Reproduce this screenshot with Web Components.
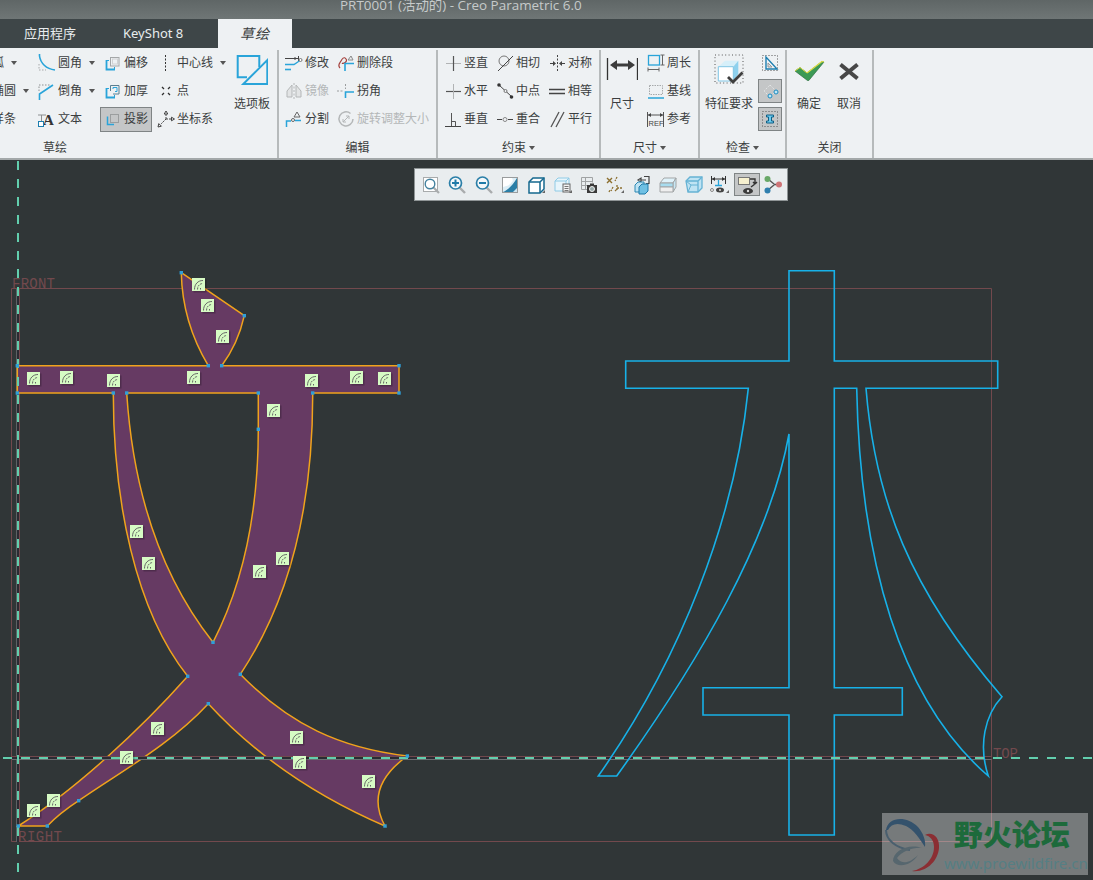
<!DOCTYPE html>
<html lang="zh">
<head>
<meta charset="utf-8">
<title>Creo Parametric</title>
<style>
  html, body { margin: 0; height: 100%; background: #303637; }
  body { font-family: "Noto Sans", "Noto Sans CJK SC", sans-serif; font-size: 12px; color: #3b3e40; overflow: hidden; }
</style>
</head>
<body>
<creo-app>
  <title-bar>PRT0001 (活动的) - Creo Parametric 6.0</title-bar>
  <ribbon-tabs>
    <ribbon-tab style="width:123px;padding-left:24px">应用程序</ribbon-tab>
    <ribbon-tab style="width:95px">KeyShot 8</ribbon-tab>
    <ribbon-tab active style="width:74px">草绘</ribbon-tab>
  </ribbon-tabs>
  <sketch-ribbon>
    <rb-group label="草绘" style="width:446px;margin-left:-167px;--pad:135px;--cols:66px 66px 53px 79px 40px">
      <rb-tool icon="arc" caret>弧</rb-tool>
      <rb-tool icon="ellipse" caret>椭圆</rb-tool>
      <rb-tool icon="spline">样条</rb-tool>
      <rb-tool icon="fillet" caret>圆角</rb-tool>
      <rb-tool icon="chamfer" caret>倒角</rb-tool>
      <rb-tool icon="text">文本</rb-tool>
      <rb-tool icon="offset">偏移</rb-tool>
      <rb-tool icon="thicken">加厚</rb-tool>
      <rb-tool icon="project" active>投影</rb-tool>
      <rb-tool icon="centerline" caret>中心线</rb-tool>
      <rb-tool icon="point">点</rb-tool>
      <rb-tool icon="csys">坐标系</rb-tool>
      <rb-large icon="palette">选项板</rb-large>
    </rb-group>
    <rb-group label="编辑" style="width:159px;--pad:2px;--cols:52px 102px">
      <rb-tool icon="modify">修改</rb-tool>
      <rb-tool icon="mirror" disabled>镜像</rb-tool>
      <rb-tool icon="divide">分割</rb-tool>
      <rb-tool icon="delete">删除段</rb-tool>
      <rb-tool icon="corner">拐角</rb-tool>
      <rb-tool icon="rotate" disabled>旋转调整大小</rb-tool>
    </rb-group>
    <rb-group label="约束" caret style="width:163px;--pad:2px;--cols:52px 52px 52px">
      <rb-tool icon="vertical">竖直</rb-tool>
      <rb-tool icon="horizontal">水平</rb-tool>
      <rb-tool icon="perpendicular">垂直</rb-tool>
      <rb-tool icon="tangent">相切</rb-tool>
      <rb-tool icon="midpoint">中点</rb-tool>
      <rb-tool icon="coincident">重合</rb-tool>
      <rb-tool icon="symmetric">对称</rb-tool>
      <rb-tool icon="equal">相等</rb-tool>
      <rb-tool icon="parallel">平行</rb-tool>
    </rb-group>
    <rb-group label="尺寸" caret style="width:99px;--cols:42px 54px">
      <rb-large icon="dimension">尺寸</rb-large>
      <rb-tool icon="perimeter">周长</rb-tool>
      <rb-tool icon="baseline">基线</rb-tool>
      <rb-tool icon="reference">参考</rb-tool>
    </rb-group>
    <rb-group label="检查" caret style="width:87px;--cols:58px 24px">
      <rb-large icon="feature">特征要求</rb-large>
      <rb-tool icon="overlap" square></rb-tool>
      <rb-tool icon="shade" square active></rb-tool>
      <rb-tool icon="ibeam" square active></rb-tool>
    </rb-group>
    <rb-group label="关闭" style="width:87px;--pad:2px;--cols:40px 40px">
      <rb-large icon="ok">确定</rb-large>
      <rb-large icon="cancel">取消</rb-large>
    </rb-group>
  </sketch-ribbon>
  <sketch-canvas>
    <view-toolbar></view-toolbar>
    <forum-mark></forum-mark>
  </sketch-canvas>
</creo-app>

<script>
const BLUE = '#29a4d9'
const GREY = '#b4b7b8'

// ribbon icons, drawn on the pixel grid of the box they sit in
const ICONS = {
  arc: `<path d="M2 15C3 8 8 3 16 2" fill="none" stroke="${BLUE}" stroke-width="1.5"/>`,
  ellipse: `<ellipse cx="9" cy="9" rx="8" ry="5" fill="none" stroke="${BLUE}" stroke-width="1.5"/>`,
  spline: `<path d="M1 14C5 2 11 16 17 4" fill="none" stroke="${BLUE}" stroke-width="1.5"/>`,
  fillet: `<path d="M1 10v6h7" fill="none" stroke="#a6a9aa" stroke-dasharray="1.5 1.5"/><path d="M1.5 0v2C2.5 9 8 15 17 16" fill="none" stroke="${BLUE}" stroke-width="1.6"/>`,
  chamfer: `<path d="M1 9V3h11" fill="none" stroke="#8d9091" stroke-dasharray="1.5 1.5"/><path d="M1.5 18V12L15 3" fill="none" stroke="${BLUE}" stroke-width="1.6"/>`,
  text: `<path d="M0 5h8M3.5 5v7" fill="none" stroke="#8d9091"/><text x="5" y="15" font-family="Liberation Serif" font-weight="700" font-size="15" fill="#333">A</text><rect x=".5" y="11.5" width="5" height="5" fill="#fff" stroke="#1d7fb0"/>`,
  offset: `<rect x="6.5" y="3.5" width="8.5" height="8.5" fill="none" stroke="#a4a7a8"/><rect x="8.5" y="5" width="5" height="5" fill="none" stroke="#d0d2d3"/><path d="M2.5 6v9.5H11" fill="none" stroke="${BLUE}" stroke-width="1.8"/><path d="M2.5 6.5H5M10.5 15.5V13" fill="none" stroke="${BLUE}"/>`,
  thicken: `<path d="M6.5 9V3.5h8.5v8.5H9" fill="none" stroke="#5b7f90"/><path d="M9 7V5.5h4v4H11" fill="none" stroke="${BLUE}"/><path d="M2.5 6v9.5H11" fill="none" stroke="${BLUE}" stroke-width="1.8"/><path d="M2.5 6.5H5M10.5 15.5V13" fill="none" stroke="${BLUE}"/>`,
  project: `<rect x="6.5" y="4.5" width="8" height="8" fill="none" stroke="#9b9e9f"/><path d="M3.5 6.5v8H10" fill="none" stroke="${BLUE}" stroke-width="1.5"/>`,
  centerline: `<path d="M8.5 1v16" stroke="#333" stroke-dasharray="2 1.5"/>`,
  point: `<path d="M5 5l2 2M13 5l-2 2M5 13l2-2M13 13l-2-2" stroke="#2f2f2f" stroke-width="1.3"/>`,
  csys: `<path d="M9 9V4M9 9h5M9 9l-5 5" fill="none" stroke="#444" stroke-dasharray="2 1"/><path d="M9 1L7.2 4h3.600zM17.500 9l-3-1.800v3.600zM1 17l3.400-.8-2.600-2.600z" fill="none" stroke="#444"/>`,
  modify: `<path d="M0 4.5h13M13.5 2v5M10 3v3" fill="none" stroke="#444"/><path d="M0 10.5h9l6-4" fill="none" stroke="${BLUE}" stroke-width="1.4"/><path d="M0 15.5h6" stroke="${BLUE}" stroke-width="1.6"/><circle cx="15.5" cy="6" r="1.5" fill="#fff" stroke="#777"/>`,
  delete: `<path d="M3 14C0 11 3 9 4 7S7 2 9 5 6 10 5 9" fill="none" stroke="#a5413c" stroke-width="1.2"/><path d="M8 17V9.5h9" fill="none" stroke="${BLUE}" stroke-width="1.6"/><path d="M11 6l3-4 2 4z" fill="none" stroke="#888"/>`,
  mirror: `<path d="M9 1v16" stroke="${GREY}" stroke-dasharray="2 1.5"/><path d="M7 3L2 9v6h5zM11 3l5 6v6h-5z" fill="#e2e4e5" stroke="${GREY}"/>`,
  corner: `<path d="M0 9h6M8.5 2v5" stroke="#9a9d9e" stroke-dasharray="2 1.5"/><path d="M8.5 16V10H17" fill="none" stroke="${BLUE}" stroke-width="1.6"/>`,
  divide: `<path d="M1.5 17v-6H6M10 10.5h6" fill="none" stroke="${BLUE}" stroke-width="1.5"/><circle cx="8" cy="10" r="1.5" fill="#fff" stroke="#666"/><path d="M9 7l3-5 3 5z" fill="none" stroke="#666"/>`,
  rotate: `<path d="M13.500 3.500A7 7 0 1 0 16 9" fill="none" stroke="${GREY}" stroke-width="1.5"/><path d="M6 12l6-6M12 6H9M12 6v3M6 12h3M6 12V9" fill="none" stroke="${GREY}"/>`,
  vertical: `<path d="M2 9.5h15" stroke="#b1b3b4"/><path d="M9.5 2v15" stroke="#555" stroke-width="1.2"/>`,
  horizontal: `<path d="M2 9.5h15" stroke="#555" stroke-width="1.2"/><path d="M9.5 2v15" stroke="#b1b3b4"/>`,
  perpendicular: `<path d="M1 16.5h16" stroke="#444"/><path d="M7.5 3v13M7.5 11.5h4v5" fill="none" stroke="#555"/>`,
  tangent: `<circle cx="8" cy="7" r="5" fill="none" stroke="#777"/><path d="M2 17L17 2" stroke="#444"/>`,
  midpoint: `<path d="M3 3l13 12" stroke="#444"/><circle cx="3" cy="3" r="1.8" fill="#333"/><circle cx="15.5" cy="15" r="1.8" fill="#333"/><circle cx="9.5" cy="9" r="1.5" fill="#eef1f3" stroke="#777"/>`,
  coincident: `<path d="M1 9.5h5M12 9.5h5" stroke="#444"/><circle cx="9" cy="9.5" r="2" fill="#eef1f3" stroke="#888"/>`,
  symmetric: `<path d="M9.5 1v16" stroke="#444" stroke-dasharray="2 1.5"/><path d="M2 9.5h5M12 9.5h5" stroke="#444"/><path d="M8 9.5l-3-2.5v5zM11 9.5l3-2.5v5z" fill="#444"/>`,
  equal: `<path d="M1 7.5h16M1 11.5h16" stroke="#444" stroke-width="1.3"/>`,
  parallel: `<path d="M3 17L11 2M8 17L16 2" stroke="#555" stroke-width="1.3"/>`,
  perimeter: `<rect x="1.5" y="1.5" width="11" height="9.5" fill="none" stroke="${BLUE}" stroke-width="1.3"/><path d="M15.5 1v10M13.5 1h4M13.5 11h4M1 15.5h11M1 13.5v4M12 13.5v4" fill="none" stroke="#666"/>`,
  baseline: `<rect x="2.5" y="3.5" width="13" height="9" fill="none" stroke="#a6a9aa" stroke-dasharray="1.5 1"/><path d="M1 16h16" stroke="${BLUE}" stroke-width="1.5"/>`,
  reference: `<path d="M.5 2v15M16.5 2v15" stroke="#555"/><path d="M1 5h15" stroke="#555"/><path d="M1 5l3-2v4zM16 5l-3-2v4z" fill="#444"/><text x="1.5" y="15.5" font-family="Liberation Sans" font-size="7.5" fill="#444">REF</text>`,
  overlap: `<rect x="1.5" y="1.5" width="15" height="15" fill="none" stroke="#555" stroke-dasharray="1 2"/><path d="M5 3v12h11z" fill="none" stroke="#1d7fb0" stroke-width="1.4"/><path d="M7 9v4h4z" fill="#d9e2e7" stroke="#999"/>`,
  shade: `<path d="M9 3l6 6-6 6-6-6z" fill="none" stroke="#e2e4e5" stroke-dasharray="2 1.5"/><circle cx="9" cy="14" r="2" fill="#bfe6f6" stroke="#1d8cc0"/><circle cx="15" cy="10" r="2" fill="#bfe6f6" stroke="#1d8cc0"/>`,
  ibeam: `<rect x="1.5" y="1.5" width="15" height="15" fill="none" stroke="#555" stroke-dasharray="1 2"/><path d="M5.5 5h7v2h-2v4h2v2h-7v-2h2V7h-2z" fill="#6ccbf0" stroke="#0f5f85"/>`,
  palette: `<path d="M11 23.3H1.7V2H23.3V13" fill="none" stroke="${BLUE}" stroke-width="2"/><path d="M31.3 6V30H7.3z" fill="none" stroke="${BLUE}" stroke-width="2"/>`,
  dimension: `<path d="M1.5 4v22M31.5 4v22" stroke="#333" stroke-width="1.3"/><path d="M8 11h17" stroke="#3c3c3c" stroke-width="3"/><path d="M4 11l7-5v10zM29 11l-7-5v10z" fill="#3c3c3c"/>`,
  feature: `<rect x="2" y="1" width="28" height="28" fill="none" stroke="#555" stroke-dasharray="1 2.4"/><path d="M5.3 12.7l6.7-6H25.3l-5 6z" fill="#d6eff9"/><path d="M20.3 12.7l5-6V20l-5 7z" fill="#8ed1ee"/><path d="M5.3 12.7h15V27H5.3z" fill="#fff" stroke="#7fc5e4"/><path d="M15 23l5 5 9.5-9.5" fill="none" stroke="#3f3f3f" stroke-width="2.8"/>`,
  ok: `<path d="M2 17l5-3.5 7 5.5L29 7.5l2 .5-15.2 18.5h-1.3z" fill="#3c9a55" stroke="#2c6e40" stroke-width=".7"/><path d="M14 19L29 7.5l2 .5" fill="none" stroke="#dcdc46" stroke-width="1.2"/><path d="M2 17l5-3.5 7 5.5" fill="none" stroke="#dcdc46" stroke-width="1"/>`,
  cancel: `<path d="M7.5 10.5l17 14M24.5 10.5l-17 14" stroke="#474747" stroke-width="4"/>`
}

const tick = '<path d="M17 19h3v-3z" fill="#666"/>'
const lens = (c, inner) => `<path d="M13 13l6 6" stroke="#a9acad" stroke-width="2.4"/><circle cx="9.5" cy="9" r="6" fill="#f4f8fa" stroke="${c}" stroke-width="1.7"/>${inner}`

// view toolbar icons, in the order they are shown
const VIEW_ICONS = [
  `<rect x="3.5" y="3.5" width="14" height="14" fill="#fff" stroke="#a8abac"/><path d="M13 13l6 6" stroke="#a9acad" stroke-width="2.2"/><circle cx="10" cy="10" r="4.8" fill="none" stroke="#44829f" stroke-width="1.4"/>`,
  lens('#2b7fa8', '<path d="M6 9h7M9.5 5.5v7" stroke="#1f7ba9" stroke-width="2"/>'),
  lens('#2b7fa8', '<path d="M6 9h7" stroke="#1f7ba9" stroke-width="2"/>'),
  `<rect x="3.5" y="3.5" width="15" height="15" fill="#dceef6" stroke="#999c9d"/><path d="M4 18c5-2 10-7 14-14v14z" fill="#2a7ea6"/><path d="M4 4h9c1 2 1 3 0 4-3 4-6 4-9 5z" fill="#fff"/><path d="M14 18l4-4v4z" fill="#cfe6f1"/>`,
  `<path d="M4 8l4-4h11v11l-4 4H4z" fill="#fff" stroke="#15688f" stroke-width="1.5"/><path d="M4 8h11v11M15 8l4-4" fill="none" stroke="#15688f" stroke-width="1.5"/>${tick}`,
  `<path d="M3 7l3-3h11v10l-3 3H3z" fill="#e8f5fb" stroke="#8fcbe6"/><path d="M3 7h11v10M14 7l3-3" fill="none" stroke="#8fcbe6"/><rect x="11" y="10" width="7" height="8" fill="#f3f3f3" stroke="#666"/><path d="M12.5 12.5h4M12.5 14.5h4M12.5 16.5h4" stroke="#777"/>${tick}`,
  `<path d="M3.5 3.5h11v5M3.5 3.5v12h6M3.5 7.5h11M3.5 11.5h7M7.5 3.5v12" fill="none" stroke="#a0a3a4"/><rect x="9" y="11" width="10" height="8" fill="#3a3a3a"/><rect x="12" y="9.5" width="4" height="2" fill="#3a3a3a"/><circle cx="14" cy="15" r="2.5" fill="#9aa" stroke="#eee"/>`,
  `<path d="M3 4l5 5M8 4l-5 5" stroke="#8c6f2f" stroke-width="1.4"/><path d="M13 3l-2 4M9 13l-2 4M5 18l1-2M13 11v5M13 14h6M11 17l2-2" fill="none" stroke="#8c6f2f" stroke-width="1.3" stroke-dasharray="2 1"/>${tick}`,
  `<path d="M10 6h5M10 4v4l-3-2zM13 2.5h5v7h-3" fill="none" stroke="#444" stroke-width="1.2"/><path d="M4 11l3-3h6v7l-3 3H4z" fill="#bfe3f3" stroke="#2a88b4"/><path d="M8 13l3-3h6v7l-3 3H8z" fill="#6fc0e3" stroke="#1f7ba9"/>`,
  `<path d="M3 9l4-5h12l-3 5z" fill="#dff2fa" stroke="#a2a5a6"/><path d="M16 9l3-5v9l-3 5z" fill="#c8e8f5" stroke="#a2a5a6"/><path d="M3 9h13v4H3z" fill="#a7dcef" stroke="#a2a5a6"/><path d="M3 13h13v5H3z" fill="#efefef" stroke="#a2a5a6"/>`,
  `<path d="M3 7l4-4h12v11l-4 4H5z" fill="#bfe3f3" stroke="#65b2d4" stroke-width="1.3"/><path d="M3 7h12v11M15 7l4-4" fill="none" stroke="#65b2d4" stroke-width="1.3"/><path d="M3 7l5 4h7M8 11l-3 7" fill="none" stroke="#65b2d4"/>`,
  `<path d="M2.5 2v8M16.5 2v8M3 5h13" fill="none" stroke="#333"/><path d="M3 5l3-2v4zM16 5l-3-2v4z" fill="#333"/><path d="M6 11.5h7M9.5 6v5" stroke="${BLUE}" stroke-width="1.3"/><circle cx="3" cy="16" r="1.5" fill="#eee" stroke="#888"/><ellipse cx="11" cy="16" rx="4" ry="2.5" fill="#444"/><circle cx="11" cy="16" r="1" fill="#ddd"/>${tick}`,
  `<rect x="2.5" y="3.5" width="11" height="7" fill="#f6f0cf" stroke="#777"/><path d="M14 5h5v5M19 10l-2-2M19 10l2-2M15 13l4-3" fill="none" stroke="#333" stroke-width="1.4"/><ellipse cx="12" cy="17" rx="5" ry="3" fill="#3a3a3a"/><circle cx="12" cy="17" r="1.2" fill="#ddd"/>`,
  `<path d="M6 5l6 5M6 16l6-5M12 10.5h5" stroke="#555" stroke-width="1.4"/><circle cx="5.5" cy="5" r="3" fill="#69a868"/><circle cx="5.5" cy="16.5" r="3" fill="#2f7fae"/><circle cx="17" cy="10.5" r="3" fill="#cf7477"/>`
]

const titleBarTemplate = document.createElement('template')
titleBarTemplate.innerHTML = `
  <style>
    :host {
      display: block;
      height: 19px;
      overflow: hidden;
      padding-left: 340px;
      background: linear-gradient(#5f6666, #6f7676);
      color: #c6caca;
      font: 13.45px/16px "Open Sans", "Noto Sans CJK SC", sans-serif;
      white-space: nowrap;
    }
    span { display: block; margin-top: -3px; }
  </style>
  <span><slot></slot></span>
`
customElements.define('title-bar', class extends HTMLElement {
  constructor () {
    super()
    this.attachShadow({ mode: 'open' }).appendChild(titleBarTemplate.content.cloneNode(true))
  }
})

const tabsTemplate = document.createElement('template')
tabsTemplate.innerHTML = `
  <style>
    :host { display: flex; height: 29px; background: #3e4648; }
  </style>
  <slot></slot>
`
customElements.define('ribbon-tabs', class extends HTMLElement {
  constructor () {
    super()
    this.attachShadow({ mode: 'open' }).appendChild(tabsTemplate.content.cloneNode(true))
  }
})

const tabTemplate = document.createElement('template')
tabTemplate.innerHTML = `
  <style>
    :host {
      display: block;
      box-sizing: border-box;
      line-height: 29px;
      font-size: 13px;
      color: #e8ecee;
      white-space: nowrap;
    }
    :host([active]) {
      background: #eef1f3;
      color: #3b3e40;
      font-style: italic;
      font-size: 14px;
      letter-spacing: 1px;
      text-align: center;
    }
  </style>
  <slot></slot>
`
customElements.define('ribbon-tab', class extends HTMLElement {
  constructor () {
    super()
    this.attachShadow({ mode: 'open' }).appendChild(tabTemplate.content.cloneNode(true))
  }
})

const ribbonTemplate = document.createElement('template')
ribbonTemplate.innerHTML = `
  <style>
    :host {
      display: flex;
      height: 110px;
      background: #eef1f3;
      border-bottom: 2px solid #a3a8a9;
      overflow: hidden;
    }
  </style>
  <slot></slot>
`
customElements.define('sketch-ribbon', class extends HTMLElement {
  constructor () {
    super()
    this.attachShadow({ mode: 'open' }).appendChild(ribbonTemplate.content.cloneNode(true))
  }
})

const groupTemplate = document.createElement('template')
groupTemplate.innerHTML = `
  <style>
    :host {
      display: flex;
      flex: none;
      flex-direction: column;
      box-sizing: border-box;
      margin-top: 2px;
      border-right: 2px solid #b6babb;
    }
    .tools {
      display: grid;
      grid-auto-flow: column;
      grid-template-rows: repeat(3, 28px);
      grid-template-columns: var(--cols);
      margin-top: -1px;
      padding-left: var(--pad, 0);
    }
    .label {
      display: flex;
      align-items: center;
      justify-content: center;
      gap: 3px;
      padding-top: 8px;
      line-height: 14px;
    }
    .caret {
      display: none;
      border: 3.5px solid transparent;
      border-top: 4px solid #555;
      border-bottom: 0;
    }
    :host([caret]) .caret { display: block; }
  </style>
  <div class="tools"><slot></slot></div>
  <div class="label"><span class="name"></span><i class="caret"></i></div>
`
customElements.define('rb-group', class extends HTMLElement {
  constructor () {
    super()
    this.attachShadow({ mode: 'open' }).appendChild(groupTemplate.content.cloneNode(true))
  }

  connectedCallback () {
    this.shadowRoot.querySelector('.name').textContent = this.getAttribute('label')
  }
})

const toolTemplate = document.createElement('template')
toolTemplate.innerHTML = `
  <style>
    :host {
      display: flex;
      align-items: center;
      align-self: center;
      justify-self: start;
      box-sizing: border-box;
      height: 25px;
      padding: 0 3px;
      border: 1px solid transparent;
      gap: 2px;
      line-height: 14px;
      white-space: nowrap;
    }
    :host([active]) { background: #c4c6c7; border-color: #7f8485; }
    :host([disabled]) { color: #b4b7b8; }
    :host([square]) { width: 24px; height: 24px; padding: 0; justify-content: center; }
    svg { flex: none; margin-top: -1px; }
    .caret {
      display: none;
      margin-left: 5px;
      border: 3.5px solid transparent;
      border-top: 4px solid #555;
      border-bottom: 0;
    }
    :host([caret]) .caret { display: block; }
  </style>
  <svg width="18" height="18" viewBox="0 0 18 18"></svg>
  <slot></slot>
  <i class="caret"></i>
`
customElements.define('rb-tool', class extends HTMLElement {
  constructor () {
    super()
    this.attachShadow({ mode: 'open' }).appendChild(toolTemplate.content.cloneNode(true))
  }

  connectedCallback () {
    this.shadowRoot.querySelector('svg').innerHTML = ICONS[this.getAttribute('icon')]
  }
})

const largeTemplate = document.createElement('template')
largeTemplate.innerHTML = `
  <style>
    :host {
      display: flex;
      flex-direction: column;
      align-items: center;
      grid-row: 1 / -1;
      padding-top: 6px;
      line-height: 14px;
      white-space: nowrap;
    }
    svg { margin: -1px 0 11px; }
  </style>
  <svg width="32" height="32" viewBox="0 0 32 32"></svg>
  <slot></slot>
`
customElements.define('rb-large', class extends HTMLElement {
  constructor () {
    super()
    this.attachShadow({ mode: 'open' }).appendChild(largeTemplate.content.cloneNode(true))
  }

  connectedCallback () {
    this.shadowRoot.querySelector('svg').innerHTML = ICONS[this.getAttribute('icon')]
  }
})

const toolbarTemplate = document.createElement('template')
toolbarTemplate.innerHTML = `
  <style>
    :host {
      position: absolute;
      left: 414px;
      top: 8px;
      display: flex;
      align-items: center;
      box-sizing: border-box;
      width: 374px;
      height: 33px;
      padding-left: 3px;
      background: #e9edef;
      border: 1px solid #8f9596;
    }
    span {
      display: flex;
      align-items: center;
      justify-content: center;
      box-sizing: border-box;
      width: 26.3px;
      height: 23px;
    }
    span.on { background: #c4c6c7; outline: 1px solid #7f8485; outline-offset: -1px; }
  </style>
`
customElements.define('view-toolbar', class extends HTMLElement {
  constructor () {
    super()
    this.attachShadow({ mode: 'open' }).appendChild(toolbarTemplate.content.cloneNode(true))
    VIEW_ICONS.forEach((icon, i) => {
      const button = document.createElement('span')
      if (i === 12) button.className = 'on'
      button.innerHTML = `<svg width="22" height="22" viewBox="0 0 22 22">${icon}</svg>`
      this.shadowRoot.appendChild(button)
    })
  }
})

const markTemplate = document.createElement('template')
markTemplate.innerHTML = `
  <style>
    :host {
      position: absolute;
      left: 882px;
      top: 653px;
      display: flex;
      box-sizing: border-box;
      width: 206px;
      height: 62px;
      padding: 2px 0 0 2px;
      background: rgba(255, 255, 255, .34);
    }
    svg { flex: none; }
    .names { display: flex; flex-direction: column; align-items: flex-end; flex: 1; padding: 4px 5px 0 0; }
    .cn {
      margin-right: 18px;
      color: #1d6a3b;
      font: 900 29px/28px "Noto Sans CJK SC", sans-serif;
      white-space: nowrap;
    }
    .url {
      margin-top: 6px;
      color: #557f84;
      font: 15px/20px "Noto Sans", sans-serif;
      white-space: nowrap;
    }
  </style>
  <svg width="60" height="58" viewBox="0 0 60 58">
    <path d="M2 15C4 2 22 0 34 12 39 18 42 25 41 32 36 24 30 15 22 11 13 7 7 9 4 15Z" fill="#34526c"/>
    <path d="M2 15C2 25 12 33 26 35" fill="none" stroke="#4a5f6e" stroke-width="2"/>
    <path d="M41 20C48 16 56 22 55 33 54 46 42 58 28 56 40 54 50 44 50 32 50 25 46 21 41 20Z" fill="#8b2e33"/>
    <path d="M9 46C9 36 24 28 38 33 30 32 18 36 13 43 18 50 26 48 34 40 28 50 14 54 9 46Z" fill="#56666e"/>
  </svg>
  <div class="names"><span class="cn">野火论坛</span><span class="url">www.proewildfire.cn</span></div>
`
customElements.define('forum-mark', class extends HTMLElement {
  constructor () {
    super()
    this.attachShadow({ mode: 'open' }).appendChild(markTemplate.content.cloneNode(true))
  }
})

// weak-constraint badges along the selected profile
const MARKERS = [[198, 284], [207, 305], [222, 336], [33, 378], [66, 377], [113, 380], [193, 377], [311, 380], [356, 377], [384, 378], [273, 410], [136, 531], [148, 563], [282, 558], [259, 571], [157, 728], [126, 757], [53, 800], [33, 810], [296, 737], [299, 762], [368, 781]]
const NODES = [[181.3, 272.7], [244.3, 315.7], [221.7, 365.7], [208.3, 365.7], [17.3, 365.7], [399, 365.7], [399, 393], [312.7, 393], [258.3, 393], [258.3, 429.3], [126.7, 393], [113.3, 393], [17.3, 393], [213, 642.3], [187.7, 676.3], [240.3, 674.3], [208.3, 703.7], [407.3, 756], [385, 826], [78.7, 800.7], [47.3, 826], [18.3, 826]]

const WEN = 'M181.3 272.7L244.3 315.7C240 335 232 352 221.7 365.7H399V393H312.7C313 505 290 600 240.3 674.3C290 725 340 748 407.3 756C385 772 368 795 385 826C320 798 260 760 208.3 703.7C170 745 120 772 78.7 800.7C66 809 56 817 47.3 826H18.3C75 790 140 730 187.7 676.3C135 610 113.3 500 113.3 393H17.3V365.7H208.3C193 340 182 310 181.3 272.7Z' +
  'M126.7 393H258.3V429.3C258.3 510 245 580 213 642.3C160 575 133 490 126.7 393Z'
const BEN = 'M789 270.7H834.3V361H997.7V388.3H866C875 500 910 590 1002 696.7C985 715 978 745 988.3 776C900 700 860 560 856.7 388.3H834.3V687.7H902.3V715H834.3V835H789V715H703V687.7H789V434C770 540 700 660 616.7 776H598.3C680 660 735 520 748.3 388.3H625.7V361H789Z'

const canvasTemplate = document.createElement('template')
canvasTemplate.innerHTML = `
  <style>
    :host { display: block; position: relative; flex: 1; background: #303637; overflow: hidden; }
    svg { display: block; }
    text { font-family: "Liberation Mono", monospace; font-size: 14px; fill: #72494d; }
  </style>
  <svg width="1093" height="720" viewBox="0 160 1093 720">
    <path d="M11.5 288.5H991.5V841.5H11.5Z M19.5 288.5V841.5" fill="none" stroke="#72494d"/>
    <path d="M16.5 289V842" stroke="#5d6264"/>
    <path d="M18 289V842" stroke="#2b2b33" stroke-width="2"/>
    <text x="12" y="288" textLength="43">FRONT</text>
    <text x="18" y="841" textLength="44">RIGHT</text>
    <text x="993" y="758" textLength="25">TOP</text>
    <path d="${WEN}" fill="#663a63" fill-rule="evenodd" stroke="#f0a31c" stroke-width="1.5"/>
    <path d="M12 756.5H991.5" stroke="#72494d"/>
    <path d="M12 759.5H991.5" stroke="#6a6f71"/>
    <path d="M12 758H991.5" stroke="#2b2b33" stroke-width="2"/>
    <path d="${BEN}" fill="none" stroke="#17b1e8" stroke-width="1.6"/>
    <path d="M3 758H1093" stroke="#62cfae" stroke-width="2" stroke-dasharray="9 9"/>
    <path d="M18 161V880" stroke="#62cfae" stroke-width="2" stroke-dasharray="9 9"/>
    <g class="nodes"></g>
    <g class="markers"></g>
  </svg>
  <slot></slot>
`
customElements.define('sketch-canvas', class extends HTMLElement {
  constructor () {
    super()
    this.attachShadow({ mode: 'open' }).appendChild(canvasTemplate.content.cloneNode(true))
    this.shadowRoot.querySelector('.nodes').innerHTML = NODES
      .map(([x, y]) => `<rect x="${x - 1.7}" y="${y - 1.7}" width="3.4" height="3.4" fill="#2f9fd8"/>`).join('')
    this.shadowRoot.querySelector('.markers').innerHTML = MARKERS.map(([x, y]) => `
      <g transform="translate(${x - 6} ${y - 6})">
        <rect x="1.5" y="1.5" width="13" height="13" fill="#000" opacity=".22"/>
        <rect width="13" height="13" fill="#d6fbc4"/>
        <path d="M2.5 11.5C2.5 6 6 2.5 11 2.5" fill="none" stroke="#666"/>
        <path d="M5.5 11.5C5.5 8 7.5 5.5 11 5.5" fill="none" stroke="#666" stroke-dasharray="2 1"/>
        <path d="M8.5 11.5V10" stroke="#666"/>
      </g>`).join('')
  }
})

const appTemplate = document.createElement('template')
appTemplate.innerHTML = `
  <style>
    :host { display: flex; flex-direction: column; height: 880px; overflow: hidden; }
  </style>
  <slot></slot>
`
customElements.define('creo-app', class extends HTMLElement {
  constructor () {
    super()
    this.attachShadow({ mode: 'open' }).appendChild(appTemplate.content.cloneNode(true))
  }
})
</script>
</body>
</html>
